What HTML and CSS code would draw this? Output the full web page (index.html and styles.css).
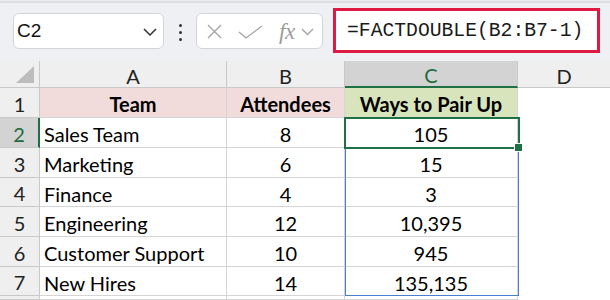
FILE: index.html
```html
<!DOCTYPE html>
<html>
<head>
<meta charset="utf-8">
<link rel="stylesheet" href="styles.css">
</head>
<body>
<div class="app">
  <div class="topline"></div>
  <div class="toolbar">
    <div class="namebox">
      <span class="ref">C2</span>
      <svg class="chev" width="14" height="8" viewBox="0 0 14 8"><path d="M1 1 L7 7 L13 1" fill="none" stroke="#333" stroke-width="1.5"/></svg>
    </div>
    <div class="dots"><i></i><i></i><i></i></div>
    <div class="fxbox">
      <svg class="ico-x" width="15" height="15" viewBox="0 0 15 15"><path d="M1 1 L14 14 M14 1 L1 14" fill="none" stroke="#a3a3a3" stroke-width="1.3"/></svg>
      <svg class="ico-ok" width="25" height="14" viewBox="0 0 25 14"><path d="M1 7 L8 13 L24 1" fill="none" stroke="#a3a3a3" stroke-width="1.3"/></svg>
      <span class="fx">fx</span>
      <svg class="chev-s" width="13" height="8" viewBox="0 0 13 8"><path d="M1 1 L6.5 6.5 L12 1" fill="none" stroke="#a3a3a3" stroke-width="1.4"/></svg>
    </div>
    <div class="formula">=FACTDOUBLE(B2:B7-1)</div>
  </div>
  <div class="sheet">
    <div class="hd corner"><svg width="20" height="18" viewBox="0 0 20 18"><polygon points="19,0 19,17 1,17" fill="#bdbdbd"/></svg></div>
    <div class="hd col">A</div>
    <div class="hd col">B</div>
    <div class="hd col sel-col">C</div>
    <div class="hd col last">D</div>

    <div class="hd row">1</div>
    <div class="c ctr bold pink">Team</div>
    <div class="c ctr bold pink">Attendees</div>
    <div class="c ctr bold green">Ways to Pair Up</div>
    <div class="c blank"></div>

    <div class="hd row sel-row">2</div>
    <div class="c">Sales Team</div>
    <div class="c ctr">8</div>
    <div class="c ctr active">105<div class="range"></div><div class="selection"></div></div>
    <div class="c blank"></div>

    <div class="hd row">3</div>
    <div class="c">Marketing</div>
    <div class="c ctr">6</div>
    <div class="c ctr">15</div>
    <div class="c blank"></div>

    <div class="hd row">4</div>
    <div class="c">Finance</div>
    <div class="c ctr">4</div>
    <div class="c ctr">3</div>
    <div class="c blank"></div>

    <div class="hd row">5</div>
    <div class="c">Engineering</div>
    <div class="c ctr">12</div>
    <div class="c ctr">10,395</div>
    <div class="c blank"></div>

    <div class="hd row">6</div>
    <div class="c">Customer Support</div>
    <div class="c ctr">10</div>
    <div class="c ctr">945</div>
    <div class="c blank"></div>

    <div class="hd row">7</div>
    <div class="c">New Hires</div>
    <div class="c ctr">14</div>
    <div class="c ctr">135,135</div>
    <div class="c blank"></div>

    <div class="hd row"></div>
    <div class="c"></div>
    <div class="c"></div>
    <div class="c"></div>
    <div class="c blank"></div>
  </div>
</div>
</body>
</html>
```

FILE: styles.css
```css
html, body {
  margin: 0;
  padding: 0;
}
body {
  width: 610px;
  height: 300px;
  overflow: hidden;
  background: #ffffff;
  font-family: Lato, "Liberation Sans", sans-serif;
}
.app {
  width: 610px;
  height: 300px;
  display: flex;
  flex-direction: column;
}
.topline {
  height: 3px;
  flex: none;
  background: linear-gradient(#e9ebee 0, #e9ebee 1px, #d2d4d7 2px, #e4e6e9 3px);
}
.toolbar {
  height: 58px;
  flex: none;
  background: #eef0f3;
  display: flex;
  align-items: flex-start;
  padding-left: 13px;
  box-sizing: border-box;
}
.namebox {
  margin-top: 10px;
  width: 151px;
  height: 36px;
  box-sizing: border-box;
  background: #fff;
  border: 1px solid #d3d5d8;
  border-radius: 6px;
  display: flex;
  align-items: center;
  justify-content: space-between;
  padding: 0 6px 0 3px;
}
.ref {
  font-family: "Liberation Sans", Arial, sans-serif;
  font-size: 19px;
  color: #111;
}
.chev {
  margin-top: 1px;
}
.dots {
  margin: 21px 0 0 15px;
  width: 3px;
  display: flex;
  flex-direction: column;
  gap: 4px;
}
.dots i {
  display: block;
  width: 3px;
  height: 3px;
  border-radius: 50%;
  background: #333;
}
.fxbox {
  margin: 10px 0 0 14px;
  width: 127px;
  height: 36px;
  box-sizing: border-box;
  background: #fff;
  border: 1px solid #d3d5d8;
  border-radius: 6px;
  display: flex;
  align-items: center;
  padding-left: 10px;
}
.ico-x {
  margin-top: 1px;
}
.ico-ok {
  margin-left: 16px;
  margin-top: 1px;
}
.fx {
  margin-left: 16px;
  font-family: "Liberation Serif", "DejaVu Serif", serif;
  font-style: italic;
  font-size: 23px;
  color: #9b9b9b;
  letter-spacing: -0.5px;
  line-height: 1;
}
.chev-s {
  margin-left: 6px;
  margin-top: 1px;
}
.formula {
  margin: 5px 0 0 10px;
  width: 267px;
  height: 45px;
  box-sizing: border-box;
  background: #fff;
  border: 3px solid #de1a42;
  display: flex;
  align-items: center;
  padding-left: 11px;
  font-family: "Liberation Mono", "DejaVu Sans Mono", monospace;
  font-size: 19.7px;
  color: #1a1a1a;
}
.sheet {
  flex: 1;
  min-height: 0;
  overflow: hidden;
  display: grid;
  grid-template-columns: 40px 187px 118px 173px 92px;
  grid-template-rows: 27px 30px 30px 30px 29px 30px 30px 29px 1fr;
  font-size: 20px;
  color: #000;
}
.hd {
  background: #efefef;
  box-sizing: border-box;
  display: flex;
  align-items: center;
  justify-content: center;
  color: #222;
  font-size: 20px;
}
.corner {
  border-right: 1px solid #c9c9c9;
  border-bottom: 1px solid #c9c9c9;
  align-items: flex-end;
  justify-content: flex-end;
  padding: 0 4px 3px 0;
}
.corner svg {
  display: block;
}
.col {
  border-right: 1px solid #c9c9c9;
  border-bottom: 1px solid #c9c9c9;
  padding-top: 3px;
}
.col.last {
  border-right: none;
}
.sel-col {
  background: #d3d3d3;
  color: #1d6b3c;
  border-bottom: 2px solid #1e7145;
}
.row {
  border-right: 1px solid #c9c9c9;
  border-bottom: 1px solid #c9c9c9;
  padding-top: 2px;
}
.sel-row {
  background: #d3d3d3;
  color: #1d6b3c;
  border-right: 2px solid #1e7145;
}
.c {
  box-sizing: border-box;
  border-right: 1px solid #d5d5d5;
  border-bottom: 1px solid #d5d5d5;
  display: flex;
  align-items: center;
  padding: 3px 4px 0 4px;
  white-space: nowrap;
  overflow: hidden;
}
.c.blank {
  border: none;
}
.ctr {
  justify-content: center;
}
.bold {
  font-weight: bold;
}
.pink {
  background: #f2dcdb;
}
.green {
  background: #d8e4bc;
}
.active {
  position: relative;
  overflow: visible;
  z-index: 2;
}
.range {
  position: absolute;
  left: 0;
  top: 0;
  width: 174px;
  height: 178px;
  box-sizing: border-box;
  border: 1px solid #4a7fd0;
  pointer-events: none;
}
.selection {
  position: absolute;
  left: -1px;
  top: -1px;
  width: 176px;
  height: 32px;
  box-sizing: border-box;
  border: 2px solid #1e7145;
  pointer-events: none;
}
.selection::after {
  content: "";
  position: absolute;
  right: -5px;
  bottom: -5px;
  width: 7px;
  height: 7px;
  background: #1e7145;
  border: 1px solid #fff;
}
```
